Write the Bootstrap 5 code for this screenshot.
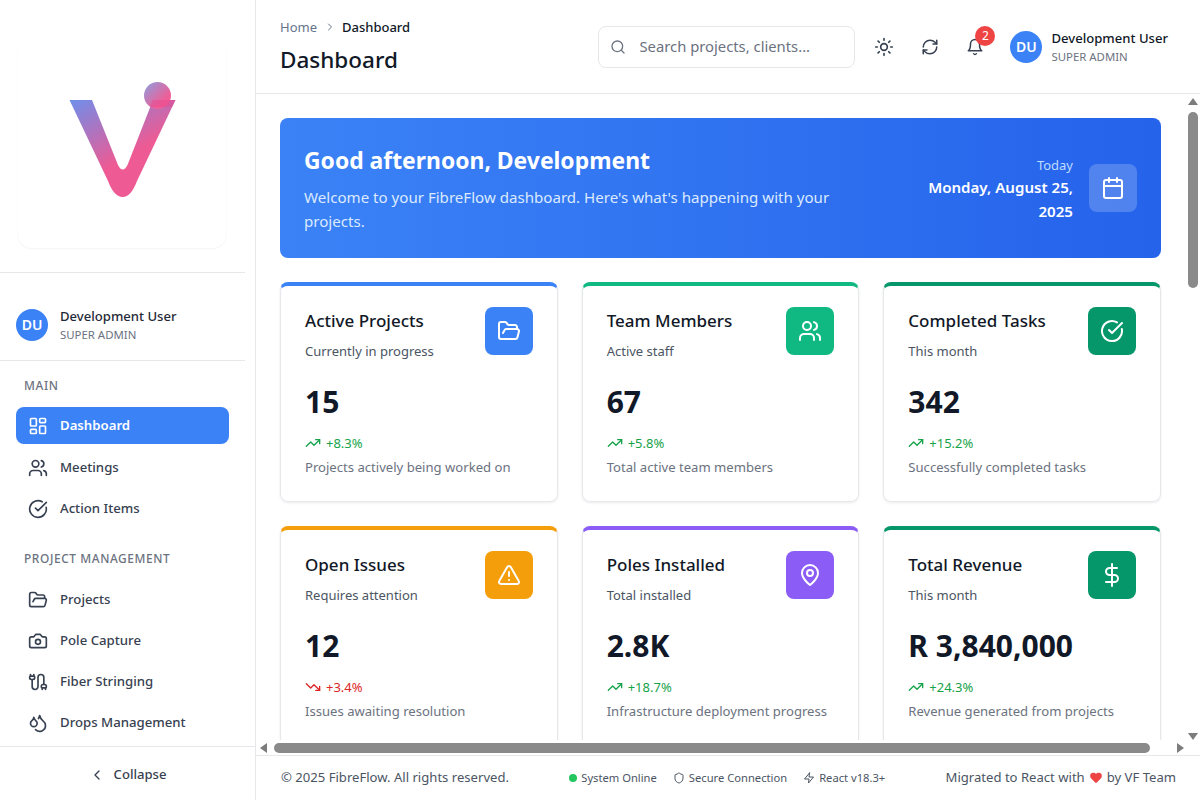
<!DOCTYPE html>
<html lang="en">
<head>
  <meta charset="UTF-8">
  <title>FibreFlow Dashboard</title>
  <link href="https://cdn.jsdelivr.net/npm/bootstrap@5.3.3/dist/css/bootstrap.min.css" rel="stylesheet">
  <style>
    body { font-family: "Noto Sans", "Liberation Sans", sans-serif; color: #111827; height: 100vh; overflow: hidden; background: #fff; }
    .ic { width: 20px; height: 20px; fill: none; stroke: currentColor; stroke-width: 2; stroke-linecap: round; stroke-linejoin: round; flex-shrink: 0; }
    .ic-24 { width: 24px; height: 24px; }
    .ic-18 { width: 18px; height: 18px; }
    .ic-16 { width: 16px; height: 16px; }
    .ic-12 { width: 12px; height: 12px; }

    .side { width: 256px; height: 800px; border-right: 1px solid #e5e7eb; }
    .side-scroll { width: 245px; height: 746px; overflow: hidden; }
    .logo-wrap { padding: 40px 0 24px 18px; border-bottom: 1px solid #e5e7eb; height: 273px; }
    .logo-box { width: 208px; height: 208px; border-radius: 14px; box-shadow: 0 1px 2px rgba(15, 23, 42, .05); }
    .side-user { padding: 35px 16px 19px; border-bottom: 1px solid #e5e7eb; height: 88px; }
    .avatar { width: 32px; height: 32px; border-radius: 50%; background: #3b82f6; color: #fff; font-size: 14px; font-weight: 600; }
    .user-name { font-size: 13.1px; font-weight: 500; line-height: 18px; color: #1f2937; }
    .user-role { font-size: 11.4px; line-height: 16px; color: #6b7280; margin-top: 2px; }
    .nav-label { font-size: 11.9px; font-weight: 500; letter-spacing: .05em; color: #6b7280; text-transform: uppercase; padding: 0 24px; line-height: 16px; }
    .label-main { margin-top: 16px; margin-bottom: 14px; }
    .label-project { margin-top: 23px; margin-bottom: 15px; }
    .side-link { height: 37px; margin: 0 0 4px 16px; width: 213px; padding: 0 12px; gap: 12px; border-radius: 8px; font-size: 13.2px; font-weight: 500; color: #374151; text-decoration: none; }
    .side-link.active { background: #3b82f6; color: #fff; font-weight: 600; margin-bottom: 5px; }
    .collapse-btn { height: 54px; padding-top: 2px; border-top: 1px solid #e5e7eb; font-size: 13.1px; font-weight: 500; color: #374151; gap: 9px; }

    .top { height: 94px; border-bottom: 1px solid #e5e7eb; padding: 0 32px 0 24px; }
    .crumb { font-size: 13px; line-height: 20px; color: #64748b; gap: 6.5px; margin-top: 17px; }
    .crumb b { font-weight: 500; color: #111827; }
    .page-title { font-size: 22.5px; font-weight: 500; line-height: 32px; margin: 7px 0 0; color: #111827; }
    .search { width: 257px; height: 42px; border: 1px solid #e5e7eb; border-radius: 8px; padding: 0 11px; gap: 13px; color: #6b7280; font-size: 14.8px; }
    .tool { width: 46px; height: 40px; color: #374151; }
    .tool-first { margin-left: 6px; }
    .tool-bell { width: 44px; }
    .tool-count { position: absolute; top: -1px; right: 2px; width: 20px; height: 20px; border-radius: 50%; background: #ef4444; color: #fff; font-size: 12px; }
    .top-avatar { margin-left: 13px; }
    .top-user { margin-left: 9px; }
    .top-user .user-name { color: #111827; }

    .work { height: 646px; }
    .pane { flex: 1; overflow: hidden; padding: 24px; }
    .hero { height: 140px; border-radius: 8px; background: linear-gradient(90deg, #3b82f6, #2563eb); color: #fff; padding: 0 24px; margin-bottom: 24px; }
    .hero-main { padding-top: 2px; }
    .hero-title { font-size: 22.9px; font-weight: 700; line-height: 32px; margin: 0 0 8px; }
    .hero-text { font-size: 15.1px; line-height: 24px; color: #dbeafe; margin: 0; width: 560px; }
    .hero-side { padding-top: 2px; }
    .hero-day { font-size: 13px; line-height: 20px; color: #bfdbfe; }
    .hero-date { font-size: 15.1px; font-weight: 600; line-height: 24px; width: 170px; }
    .hero-icon { width: 48px; height: 48px; border-radius: 8px; background: rgba(255, 255, 255, .2); }

    .stat { border: 1px solid #e5e7eb; border-top: 4px solid var(--tone); border-radius: 8px; padding: 21px 24px 24px; height: 220px; box-shadow: 0 1px 3px rgba(0, 0, 0, .08); }
    .stat-title { font-size: 17px; font-weight: 500; line-height: 28px; color: #111827; margin: 0 0 6px; }
    .stat-sub { font-size: 13px; line-height: 20px; color: #4b5563; margin: 0; }
    .stat-icon { width: 48px; height: 48px; border-radius: 8px; background: var(--tone); color: #fff; }
    .stat-num { font-size: 30px; font-weight: 700; line-height: 36px; color: #111827; margin-top: 23px; }
    .stat-trend { font-size: 13px; line-height: 20px; gap: 5px; margin-top: 13px; }
    .up { color: #16a34a; }
    .down { color: #dc2626; }
    .stat-note { font-size: 13.1px; line-height: 20px; color: #6b7280; margin-top: 4px; }

    .vbar { width: 15px; background: #fff; padding-top: 4px; }
    .hbar { height: 15px; padding: 0 16px 0 4px; gap: 4px; }
    .arrow { width: 0; height: 0; border: 5px solid transparent; }
    .arrow-u { border-bottom: 7px solid #7c7c7c; border-top: 0; }
    .arrow-d { border-top: 7px solid #7c7c7c; border-bottom: 0; }
    .arrow-l { border-right: 7px solid #7c7c7c; border-left: 0; }
    .arrow-r { border-left: 7px solid #7c7c7c; border-right: 0; }
    .thumb-v { width: 10px; height: 176px; margin-top: 7px; border-radius: 5px; background: #8a8a8a; }
    .thumb-h { width: 876px; height: 10px; border-radius: 5px; background: #8a8a8a; margin-left: 3px; }

    .foot { height: 45px; border-top: 1px solid #e5e7eb; padding: 0 24px 0 25px; font-size: 13.1px; color: #4b5563; }
    .foot-mid { font-size: 11.2px; gap: 16px; color: #4b5563; }
    .dot { width: 8px; height: 8px; border-radius: 50%; background: #22c55e; }
    .heart { width: 14px; height: 14px; }
  </style>
</head>
<body class="d-flex">

  <svg width="0" height="0" class="position-absolute">
    <symbol id="i-dash" viewBox="0 0 24 24"><rect x="3" y="3" width="7" height="9" rx="1"/><rect x="14" y="3" width="7" height="5" rx="1"/><rect x="14" y="12" width="7" height="9" rx="1"/><rect x="3" y="16" width="7" height="5" rx="1"/></symbol>
    <symbol id="i-users" viewBox="0 0 24 24"><path d="M16 21v-2a4 4 0 0 0-4-4H6a4 4 0 0 0-4 4v2"/><circle cx="9" cy="7" r="4"/><path d="M22 21v-2a4 4 0 0 0-3-3.87"/><path d="M16 3.13a4 4 0 0 1 0 7.75"/></symbol>
    <symbol id="i-check" viewBox="0 0 24 24"><path d="M21.801 10A10 10 0 1 1 17 3.335"/><path d="m9 11 3 3L22 4"/></symbol>
    <symbol id="i-folder" viewBox="0 0 24 24"><path d="m6 14 1.5-2.9A2 2 0 0 1 9.24 10H20a2 2 0 0 1 1.94 2.5l-1.54 6a2 2 0 0 1-1.95 1.5H4a2 2 0 0 1-2-2V5a2 2 0 0 1 2-2h3.9a2 2 0 0 1 1.69.9l.81 1.2a2 2 0 0 0 1.67.9H18a2 2 0 0 1 2 2v2"/></symbol>
    <symbol id="i-camera" viewBox="0 0 24 24"><path d="M14.5 4h-5L7 7H4a2 2 0 0 0-2 2v9a2 2 0 0 0 2 2h16a2 2 0 0 0 2-2V9a2 2 0 0 0-2-2h-3l-2.5-3z"/><circle cx="12" cy="13" r="3"/></symbol>
    <symbol id="i-cable" viewBox="0 0 24 24"><path d="M17 21v-2a1 1 0 0 1-1-1v-1a2 2 0 0 1 2-2h2a2 2 0 0 1 2 2v1a1 1 0 0 1-1 1"/><path d="M19 15V6.5a1 1 0 0 0-7 0v11a1 1 0 0 1-7 0V9"/><path d="M21 21v-2h-4"/><path d="M3 5h4V3"/><path d="M7 5a1 1 0 0 1 1 1v1a2 2 0 0 1-2 2H4a2 2 0 0 1-2-2V6a1 1 0 0 1 1-1V3"/></symbol>
    <symbol id="i-drops" viewBox="0 0 24 24"><path d="M7 16.3c2.2 0 4-1.83 4-4.05 0-1.16-.57-2.26-1.71-3.19S7.29 6.75 7 5.3c-.29 1.45-1.14 2.84-2.29 3.76S3 11.1 3 12.25c0 2.22 1.8 4.05 4 4.05z"/><path d="M12.56 6.6A10.97 10.97 0 0 0 14 3.02c.5 2.5 2 4.9 4 6.5s3 3.5 3 5.5a6.98 6.98 0 0 1-11.91 4.97"/></symbol>
    <symbol id="i-left" viewBox="0 0 24 24"><path d="m15 18-6-6 6-6"/></symbol>
    <symbol id="i-right" viewBox="0 0 24 24"><path d="m9 18 6-6-6-6"/></symbol>
    <symbol id="i-search" viewBox="0 0 24 24"><path d="m21 21-4.3-4.3"/><circle cx="11" cy="11" r="8"/></symbol>
    <symbol id="i-sun" viewBox="0 0 24 24"><circle cx="12" cy="12" r="4"/><path d="M12 2v2M12 20v2M4.93 4.93l1.41 1.41M17.66 17.66l1.41 1.41M2 12h2M20 12h2M6.34 17.66l-1.41 1.41M19.07 4.93l-1.41 1.41"/></symbol>
    <symbol id="i-refresh" viewBox="0 0 24 24"><path d="M3 12a9 9 0 0 1 9-9 9.75 9.75 0 0 1 6.74 2.74L21 8"/><path d="M21 3v5h-5"/><path d="M21 12a9 9 0 0 1-9 9 9.75 9.75 0 0 1-6.74-2.74L3 16"/><path d="M8 16H3v5"/></symbol>
    <symbol id="i-bell" viewBox="0 0 24 24"><path d="M6 8a6 6 0 0 1 12 0c0 7 3 9 3 9H3s3-2 3-9"/><path d="M10.3 21a1.94 1.94 0 0 0 3.4 0"/></symbol>
    <symbol id="i-cal" viewBox="0 0 24 24"><path d="M8 2v4M16 2v4"/><rect x="3" y="4" width="18" height="18" rx="2"/><path d="M3 10h18"/></symbol>
    <symbol id="i-tup" viewBox="0 0 24 24"><polyline points="22 7 13.5 15.5 8.5 10.5 2 17"/><polyline points="16 7 22 7 22 13"/></symbol>
    <symbol id="i-tdown" viewBox="0 0 24 24"><polyline points="22 17 13.5 8.5 8.5 13.5 2 7"/><polyline points="16 17 22 17 22 11"/></symbol>
    <symbol id="i-alert" viewBox="0 0 24 24"><path d="m21.73 18-8-14a2 2 0 0 0-3.48 0l-8 14A2 2 0 0 0 4 21h16a2 2 0 0 0 1.73-3"/><path d="M12 9v4M12 17h.01"/></symbol>
    <symbol id="i-pin" viewBox="0 0 24 24"><path d="M20 10c0 6-8 12-8 12s-8-6-8-12a8 8 0 0 1 16 0Z"/><circle cx="12" cy="10" r="3"/></symbol>
    <symbol id="i-dollar" viewBox="0 0 24 24"><path d="M12 1v22"/><path d="M17 5H9.5a3.5 3.5 0 0 0 0 7h5a3.5 3.5 0 0 1 0 7H6"/></symbol>
    <symbol id="i-shield" viewBox="0 0 24 24"><path d="M20 13c0 5-3.5 7.5-7.66 8.95a1 1 0 0 1-.67-.01C7.5 20.5 4 18 4 13V6a1 1 0 0 1 1-1c2 0 4.5-1.2 6.24-2.72a1.17 1.17 0 0 1 1.52 0C14.51 3.81 17 5 19 5a1 1 0 0 1 1 1z"/></symbol>
    <symbol id="i-zap" viewBox="0 0 24 24"><polygon points="13 2 3 14 12 14 11 22 21 10 12 10 13 2"/></symbol>
    <linearGradient id="vGrad" gradientUnits="userSpaceOnUse" x1="72" y1="96" x2="112" y2="166"><stop offset="0" stop-color="#6a90ee"/><stop offset="1" stop-color="#ee5a93"/></linearGradient>
    <linearGradient id="dotGrad" x1="0" y1="0" x2="1" y2="1"><stop offset="0" stop-color="#8aa0e0"/><stop offset=".7" stop-color="#ee5f97"/></linearGradient>
  </svg>

  <aside class="side flex-shrink-0 d-flex flex-column">
    <div class="side-scroll">
      <div class="logo-wrap">
        <div class="logo-box d-flex">
          <svg width="208" height="208" viewBox="18 40 208 208">
            <path fill="url(#vGrad)" d="M69.5 100H92L118 165Q122.7 174 127.5 165L153 100H175.5L137 181Q131 197 122.7 197Q114 197 108 181Z"/>
            <circle cx="157.5" cy="95.5" r="13.5" fill="url(#dotGrad)"/>
            <path fill="#e8488f" fill-opacity=".5" d="M152.5 100H175.5L172 107H150Z"/>
          </svg>
        </div>
      </div>
      <div class="side-user d-flex align-items-center gap-2">
        <div class="avatar d-flex align-items-center justify-content-center flex-shrink-0 me-1">DU</div>
        <div>
          <div class="user-name">Development User</div>
          <div class="user-role">SUPER ADMIN</div>
        </div>
      </div>
      <div class="nav-label label-main">Main</div>
      <a class="side-link active d-flex align-items-center" href="#"><svg class="ic"><use href="#i-dash"/></svg>Dashboard</a>
      <a class="side-link d-flex align-items-center" href="#"><svg class="ic"><use href="#i-users"/></svg>Meetings</a>
      <a class="side-link d-flex align-items-center" href="#"><svg class="ic"><use href="#i-check"/></svg>Action Items</a>
      <div class="nav-label label-project">Project Management</div>
      <a class="side-link d-flex align-items-center" href="#"><svg class="ic"><use href="#i-folder"/></svg>Projects</a>
      <a class="side-link d-flex align-items-center" href="#"><svg class="ic"><use href="#i-camera"/></svg>Pole Capture</a>
      <a class="side-link d-flex align-items-center" href="#"><svg class="ic"><use href="#i-cable"/></svg>Fiber Stringing</a>
      <a class="side-link d-flex align-items-center" href="#"><svg class="ic"><use href="#i-drops"/></svg>Drops Management</a>
    </div>
    <div class="collapse-btn d-flex align-items-center justify-content-center"><svg class="ic ic-16"><use href="#i-left"/></svg>Collapse</div>
  </aside>

  <div class="flex-grow-1 d-flex flex-column" style="min-width:0">
    <header class="top d-flex justify-content-between">
      <div>
        <div class="crumb d-flex align-items-center">Home <svg class="ic ic-12"><use href="#i-right"/></svg><b>Dashboard</b></div>
        <h1 class="page-title">Dashboard</h1>
      </div>
      <div class="d-flex align-items-center">
        <div class="search d-flex align-items-center"><svg class="ic ic-16"><use href="#i-search"/></svg>Search projects, clients...</div>
        <div class="tool tool-first d-flex align-items-center justify-content-center"><svg class="ic"><use href="#i-sun"/></svg></div>
        <div class="tool d-flex align-items-center justify-content-center"><svg class="ic ic-18"><use href="#i-refresh"/></svg></div>
        <div class="tool tool-bell position-relative d-flex align-items-center justify-content-center"><svg class="ic ic-18"><use href="#i-bell"/></svg><span class="tool-count d-flex align-items-center justify-content-center">2</span></div>
        <div class="avatar top-avatar d-flex align-items-center justify-content-center flex-shrink-0">DU</div>
        <div class="top-user">
          <div class="user-name">Development User</div>
          <div class="user-role">SUPER ADMIN</div>
        </div>
      </div>
    </header>

    <div class="work d-flex">
      <main class="pane">
        <section class="hero d-flex align-items-center justify-content-between">
          <div class="hero-main">
            <h2 class="hero-title">Good afternoon, Development</h2>
            <p class="hero-text">Welcome to your FibreFlow dashboard. Here's what's happening with your projects.</p>
          </div>
          <div class="d-flex align-items-center gap-3">
            <div class="text-end hero-side">
              <div class="hero-day">Today</div>
              <div class="hero-date">Monday, August 25, 2025</div>
            </div>
            <div class="hero-icon d-flex align-items-center justify-content-center"><svg class="ic ic-24"><use href="#i-cal"/></svg></div>
          </div>
        </section>

        <div class="row g-4">
          <div class="col-4">
            <div class="stat" style="--tone:#3b82f6">
              <div class="d-flex justify-content-between">
                <div><h3 class="stat-title">Active Projects</h3><p class="stat-sub">Currently in progress</p></div>
                <div class="stat-icon d-flex align-items-center justify-content-center"><svg class="ic ic-24"><use href="#i-folder"/></svg></div>
              </div>
              <div class="stat-num">15</div>
              <div class="stat-trend up d-flex align-items-center"><svg class="ic ic-16"><use href="#i-tup"/></svg>+8.3%</div>
              <div class="stat-note">Projects actively being worked on</div>
            </div>
          </div>
          <div class="col-4">
            <div class="stat" style="--tone:#10b981">
              <div class="d-flex justify-content-between">
                <div><h3 class="stat-title">Team Members</h3><p class="stat-sub">Active staff</p></div>
                <div class="stat-icon d-flex align-items-center justify-content-center"><svg class="ic ic-24"><use href="#i-users"/></svg></div>
              </div>
              <div class="stat-num">67</div>
              <div class="stat-trend up d-flex align-items-center"><svg class="ic ic-16"><use href="#i-tup"/></svg>+5.8%</div>
              <div class="stat-note">Total active team members</div>
            </div>
          </div>
          <div class="col-4">
            <div class="stat" style="--tone:#059669">
              <div class="d-flex justify-content-between">
                <div><h3 class="stat-title">Completed Tasks</h3><p class="stat-sub">This month</p></div>
                <div class="stat-icon d-flex align-items-center justify-content-center"><svg class="ic ic-24"><use href="#i-check"/></svg></div>
              </div>
              <div class="stat-num">342</div>
              <div class="stat-trend up d-flex align-items-center"><svg class="ic ic-16"><use href="#i-tup"/></svg>+15.2%</div>
              <div class="stat-note">Successfully completed tasks</div>
            </div>
          </div>
          <div class="col-4">
            <div class="stat" style="--tone:#f59e0b">
              <div class="d-flex justify-content-between">
                <div><h3 class="stat-title">Open Issues</h3><p class="stat-sub">Requires attention</p></div>
                <div class="stat-icon d-flex align-items-center justify-content-center"><svg class="ic ic-24"><use href="#i-alert"/></svg></div>
              </div>
              <div class="stat-num">12</div>
              <div class="stat-trend down d-flex align-items-center"><svg class="ic ic-16"><use href="#i-tdown"/></svg>+3.4%</div>
              <div class="stat-note">Issues awaiting resolution</div>
            </div>
          </div>
          <div class="col-4">
            <div class="stat" style="--tone:#8b5cf6">
              <div class="d-flex justify-content-between">
                <div><h3 class="stat-title">Poles Installed</h3><p class="stat-sub">Total installed</p></div>
                <div class="stat-icon d-flex align-items-center justify-content-center"><svg class="ic ic-24"><use href="#i-pin"/></svg></div>
              </div>
              <div class="stat-num">2.8K</div>
              <div class="stat-trend up d-flex align-items-center"><svg class="ic ic-16"><use href="#i-tup"/></svg>+18.7%</div>
              <div class="stat-note">Infrastructure deployment progress</div>
            </div>
          </div>
          <div class="col-4">
            <div class="stat" style="--tone:#059669">
              <div class="d-flex justify-content-between">
                <div><h3 class="stat-title">Total Revenue</h3><p class="stat-sub">This month</p></div>
                <div class="stat-icon d-flex align-items-center justify-content-center"><svg class="ic ic-24"><use href="#i-dollar"/></svg></div>
              </div>
              <div class="stat-num">R 3,840,000</div>
              <div class="stat-trend up d-flex align-items-center"><svg class="ic ic-16"><use href="#i-tup"/></svg>+24.3%</div>
              <div class="stat-note">Revenue generated from projects</div>
            </div>
          </div>
        </div>
      </main>
      <div class="vbar d-flex flex-column align-items-center">
        <div class="arrow arrow-u"></div>
        <div class="thumb-v flex-shrink-0"></div>
        <div class="arrow arrow-d mt-auto"></div>
      </div>
    </div>

    <div class="hbar d-flex align-items-center">
      <div class="arrow arrow-l"></div>
      <div class="thumb-h"></div>
      <div class="arrow arrow-r ms-auto"></div>
    </div>

    <footer class="foot d-flex align-items-center justify-content-between">
      <div>© 2025 FibreFlow. All rights reserved.</div>
      <div class="foot-mid d-flex align-items-center">
        <span class="d-flex align-items-center gap-1"><span class="dot"></span>System Online</span>
        <span class="d-flex align-items-center gap-1"><svg class="ic ic-12"><use href="#i-shield"/></svg>Secure Connection</span>
        <span class="d-flex align-items-center gap-1"><svg class="ic ic-12"><use href="#i-zap"/></svg>React v18.3+</span>
      </div>
      <div class="d-flex align-items-center gap-1">Migrated to React with <svg class="heart" viewBox="0 0 24 24"><path fill="#ef4444" d="M19 14c1.49-1.46 3-3.21 3-5.5A5.5 5.5 0 0 0 16.5 3c-1.76 0-3 .5-4.5 2-1.5-1.5-2.74-2-4.5-2A5.5 5.5 0 0 0 2 8.5c0 2.3 1.5 4.05 3 5.5l7 7Z"/></svg> by VF Team</div>
    </footer>
  </div>

</body>
</html>
